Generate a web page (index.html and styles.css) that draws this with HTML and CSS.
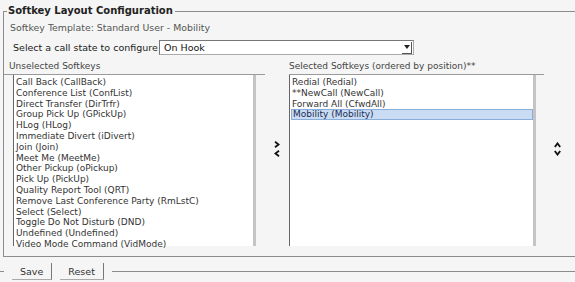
FILE: index.html
```html
<!DOCTYPE html>
<html lang="en">
<head>
    <meta charset="UTF-8">
    <title>Softkey Layout Configuration</title>
    <link rel="stylesheet" href="styles.css">
</head>
<body>

    <fieldset class="layout">
        <legend>Softkey Layout Configuration</legend>

        <p class="template">Softkey Template: Standard User - Mobility</p>

        <div class="state-row">
            <label for="callState">Select a call state to configure</label>
            <div class="select" id="callState">
                <span>On Hook</span>
                <span class="select-btn">
                    <svg width="6" height="4" viewBox="0 0 6 4"><path d="M0 0h6L3 4z" fill="#222"/></svg>
                </span>
            </div>
        </div>

        <div class="lists">
            <div class="col col-left">
                <div class="col-title">Unselected Softkeys</div>
                <div class="well">
                    <ul class="listbox">
                        <li>Call Back (CallBack)</li>
                        <li>Conference List (ConfList)</li>
                        <li>Direct Transfer (DirTrfr)</li>
                        <li>Group Pick Up (GPickUp)</li>
                        <li>HLog (HLog)</li>
                        <li>Immediate Divert (iDivert)</li>
                        <li>Join (Join)</li>
                        <li>Meet Me (MeetMe)</li>
                        <li>Other Pickup (oPickup)</li>
                        <li>Pick Up (PickUp)</li>
                        <li>Quality Report Tool (QRT)</li>
                        <li>Remove Last Conference Party (RmLstC)</li>
                        <li>Select (Select)</li>
                        <li>Toggle Do Not Disturb (DND)</li>
                        <li>Undefined (Undefined)</li>
                        <li>Video Mode Command (VidMode)</li>
                    </ul>
                </div>
            </div>

            <div class="movers">
                <svg width="6" height="7" viewBox="0 0 6 7"><path d="M1 0.8L4.6 3.5L1 6.2" fill="none" stroke="#111" stroke-width="1.8"/></svg>
                <svg width="6" height="7" viewBox="0 0 6 7"><path d="M5 0.8L1.4 3.5L5 6.2" fill="none" stroke="#111" stroke-width="1.8"/></svg>
            </div>

            <div class="col col-right">
                <div class="col-title">Selected Softkeys (ordered by position)**</div>
                <div class="well">
                    <ul class="listbox">
                        <li>Redial (Redial)</li>
                        <li>**NewCall (NewCall)</li>
                        <li>Forward All (CfwdAll)</li>
                        <li class="selected">Mobility (Mobility)</li>
                    </ul>
                </div>
            </div>

            <div class="movers order">
                <svg width="7" height="6" viewBox="0 0 7 6"><path d="M0.8 5L3.5 1.4L6.2 5" fill="none" stroke="#111" stroke-width="1.8"/></svg>
                <svg width="7" height="6" viewBox="0 0 7 6"><path d="M0.8 1L3.5 4.6L6.2 1" fill="none" stroke="#111" stroke-width="1.8"/></svg>
            </div>
        </div>
    </fieldset>

    <div class="actions">
        <span class="rule rule-short"></span>
        <button type="button">Save</button>
        <button type="button">Reset</button>
        <span class="rule"></span>
    </div>

</body>
</html>
```

FILE: styles.css
```css
body {
    margin: 0;
    background: #f4f5f4;
    font-family: 'DejaVu Sans', Verdana, sans-serif;
    font-size: 9px;
    color: #333;
    overflow: hidden;
}
.layout {
    margin: 5px 0 0 3px;
    padding: 5px 0 10px 0;
    border: 1px solid #8c8c8c;
    border-right: none;
}
.layout legend {
    margin-left: 3px;
    padding: 0 2px 0 1px;
    font-weight: bold;
    font-size: 10px;
    line-height: 12px;
    color: #222;
}
.template {
    margin: 0 0 0 6px;
    font-size: 9.4px;
    line-height: 12px;
    color: #555;
}
.state-row {
    display: flex;
    align-items: center;
    margin: 6px 0 0 9px;
    height: 15px;
    font-size: 9.5px;
    color: #222;
}
.state-row label {
    width: 146px;
}
.select {
    display: flex;
    align-items: center;
    justify-content: space-between;
    box-sizing: border-box;
    width: 255px;
    height: 15px;
    padding-left: 4px;
    background: #fff;
    border: 1px solid #aaa;
    border-top-color: #777;
    border-left-color: #777;
    color: #111;
}
.select-btn {
    display: flex;
    align-items: center;
    justify-content: center;
    width: 9px;
    height: 11px;
    margin-right: 1px;
    border-right: 1px solid #555;
    border-bottom: 1px solid #555;
}
.lists {
    display: flex;
    margin-top: 5px;
}
.col-title {
    line-height: 12px;
    margin-bottom: 2px;
    color: #444;
}
.col-left {
    width: 261px;
}
.col-left .col-title {
    padding-left: 5px;
}
.col-right {
    width: 255px;
}
.well {
    border-top: 1px solid #9a9a9a;
}
.col-left .well {
    padding-left: 9px;
}
.listbox {
    list-style: none;
    margin: 0;
    box-sizing: border-box;
    height: 171px;
    padding: 2px 0 0 2px;
    background: #fff;
    border-left: 1px solid #666;
    border-right: 3px solid #c4c4c4;
    line-height: 10.8px;
    color: #333;
}
.col-left .listbox {
    width: 243px;
}
.col-right .listbox {
    width: 247px;
}
.listbox li {
    white-space: nowrap;
}
.listbox .selected {
    margin-left: -1px;
    padding-left: 1px;
    background: #c9dcf3;
    border: 1px solid #8aaedc;
    line-height: 9px;
    color: #1c2d55;
}
.movers {
    display: flex;
    flex-direction: column;
    align-items: center;
    justify-content: center;
    gap: 2px;
    width: 24px;
    padding-bottom: 8px;
}
.order {
    width: 26px;
}
.actions {
    display: flex;
    align-items: center;
    gap: 8px;
    margin-top: 6px;
    height: 17px;
}
.rule {
    flex: 1;
    border-top: 1px solid #8c8c8c;
}
.rule-short {
    flex: 0 0 4px;
}
.actions button {
    height: 17px;
    padding: 0 8px;
    font-family: 'DejaVu Sans', Verdana, sans-serif;
    font-size: 9.5px;
    color: #333;
    background: #f4f5f4;
    border: none;
    border-right: 1px solid #777;
    border-bottom: 1px solid #aaa;
}
```
